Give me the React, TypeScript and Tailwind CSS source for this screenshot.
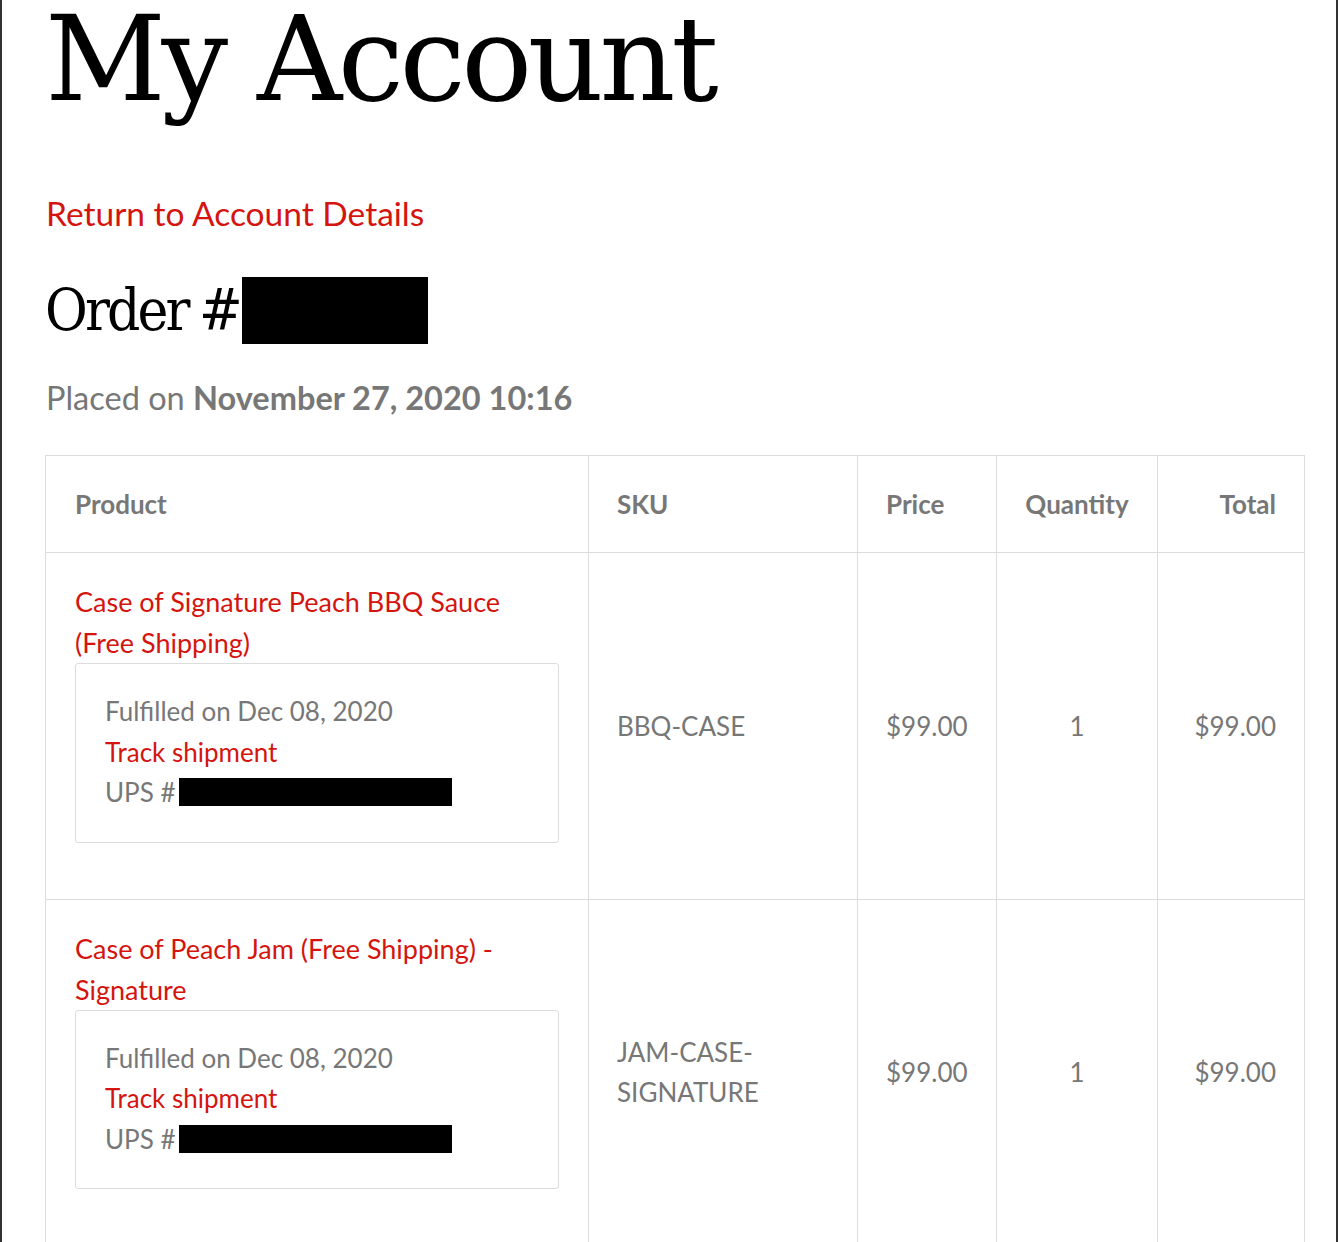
import React from "react";

const sans = { fontFamily: "Lato, 'Liberation Sans', sans-serif" };

function Shipment() {
  return (
    <div className="rounded-[3px] border border-[#dcdcdc] px-[29px] pt-[27px] pb-[29px] text-[26px] leading-[40.5px]">
      <div className="text-[#777]">Fulfilled on Dec 08, 2020</div>
      <div>
        <a className="text-[#d4150f]">Track shipment</a>
      </div>
      <div className="flex items-center text-[#777]">
        <span>UPS #</span>
        <span className="ml-[3px] inline-block h-[28px] w-[273px] bg-black" />
      </div>
    </div>
  );
}

function Row({ name, sku }: { name: React.ReactNode; sku: React.ReactNode }) {
  return (
    <tr>
      <td className="border border-[#dcdcdc] px-[29px] pt-[28px] pb-[56px] align-top">
        <a className="block text-[27px] leading-[41px] text-[#d4150f]">{name}</a>
        <Shipment />
      </td>
      <td className="border border-[#dcdcdc] px-[28px] text-left align-middle text-[26px] leading-[40px] text-[#777]">
        {sku}
      </td>
      <td className="border border-[#dcdcdc] px-[28px] text-left align-middle text-[26px] leading-[40px] text-[#777]">
        $99.00
      </td>
      <td className="border border-[#dcdcdc] px-[28px] text-center align-middle text-[26px] leading-[40px] text-[#777]">
        1
      </td>
      <td className="border border-[#dcdcdc] px-[28px] text-right align-middle text-[26px] leading-[40px] text-[#777]">
        $99.00
      </td>
    </tr>
  );
}

export default function App() {
  return (
    <div
      className="min-h-[1242px] overflow-hidden border-x-2 border-[#333] bg-white pl-[43px] pr-[32px]"
      style={sans}
    >
      <h1
        className="m-0 text-[118px] leading-none tracking-[-0.037em] text-black"
        style={{ fontFamily: "'DejaVu Serif', serif", fontWeight: 400 }}
      >
        My Account
      </h1>
      <a className="mt-[75px] block pl-[1px] text-[33.5px] leading-[40px] text-[#d4150f]">
        Return to Account Details
      </a>
      <div className="mt-[44px] flex items-center">
        <h2
          className="m-0 text-[58px] leading-[67px] font-stretch-condensed tracking-[-0.05em] text-black [word-spacing:-2px]"
          style={{ fontFamily: "'DejaVu Serif', serif", fontWeight: 400 }}
        >
          Order #
        </h2>
        <span className="ml-[2px] inline-block h-[67px] w-[186px] bg-black" />
      </div>
      <p className="mt-[34px] mb-0 pl-[1px] text-[32.5px] leading-[40px] text-[#777]">
        Placed on <span className="font-bold">November 27, 2020 10:16</span>
      </p>
      <table className="mt-[37px] w-[1259px] table-fixed border-collapse">
        <colgroup>
          <col className="w-[543px]" />
          <col className="w-[269px]" />
          <col className="w-[139px]" />
          <col className="w-[161px]" />
          <col className="w-[147px]" />
        </colgroup>
        <thead>
          <tr className="h-[97px] text-[26px] font-bold text-[#777]">
            <th className="border border-[#dcdcdc] px-[29px] text-left font-bold">Product</th>
            <th className="border border-[#dcdcdc] px-[28px] text-left font-bold">SKU</th>
            <th className="border border-[#dcdcdc] px-[28px] text-left font-bold">Price</th>
            <th className="border border-[#dcdcdc] px-[28px] text-center font-bold">Quantity</th>
            <th className="border border-[#dcdcdc] px-[28px] text-right font-bold">Total</th>
          </tr>
        </thead>
        <tbody>
          <Row
            name={
              <>
                Case of Signature Peach BBQ Sauce
                <br />
                (Free Shipping)
              </>
            }
            sku="BBQ-CASE"
          />
          <Row
            name={
              <>
                Case of Peach Jam (Free Shipping) -
                <br />
                Signature
              </>
            }
            sku={
              <>
                JAM-CASE-
                <br />
                SIGNATURE
              </>
            }
          />
        </tbody>
      </table>
    </div>
  );
}
